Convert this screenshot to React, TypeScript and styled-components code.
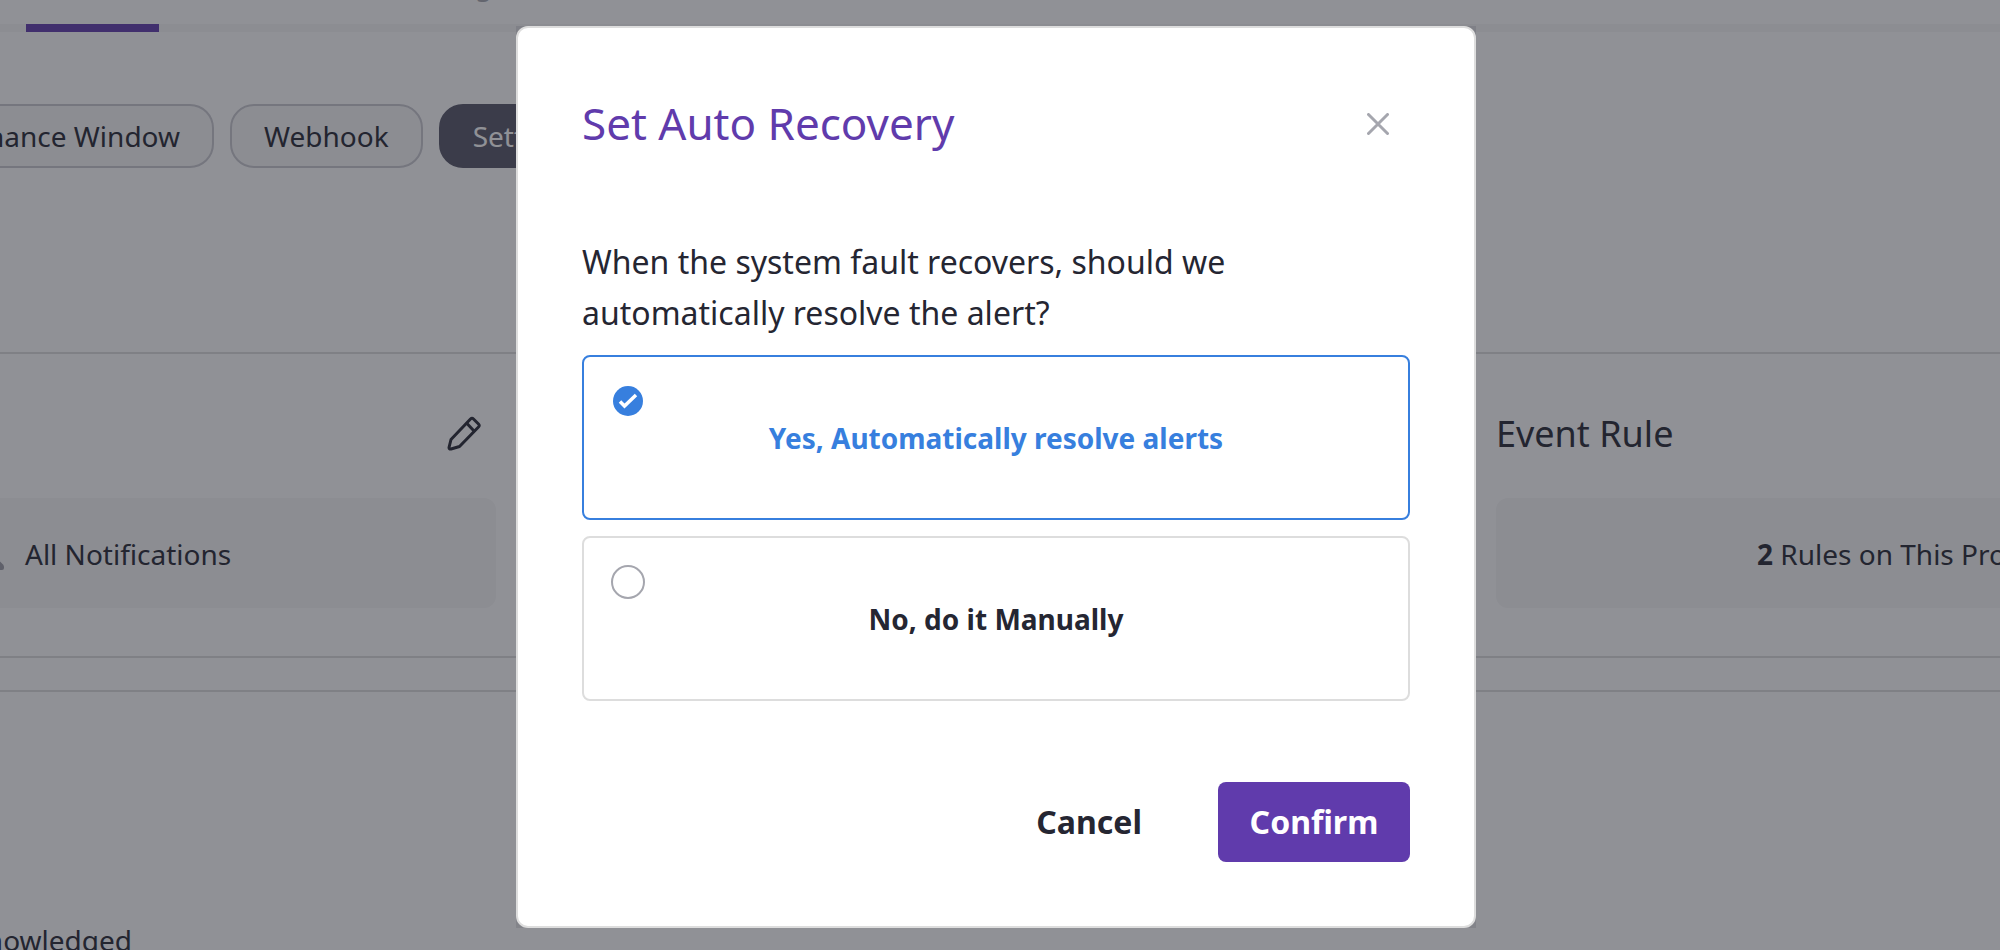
import React, { useState } from 'react';
import styled, { createGlobalStyle } from 'styled-components';

const color = {
  ink: '#252632',
  purple: '#603bac',
  blue: '#377fde',
  line: '#dddddd',
  soft: '#f6f6f7',
  muted: '#a5a6ae',
};

const GlobalStyle = createGlobalStyle`
  *, *::before, *::after { box-sizing: border-box; }
  body {
    margin: 0;
    overflow: hidden;
    background: #ffffff;
    color: ${color.ink};
    font-family: "Noto Sans", "Open Sans", sans-serif;
    font-size: 28px;
    line-height: 44px;
  }
  button { font: inherit; color: inherit; cursor: pointer; }
`;

const Page = styled.main`
  height: 100vh;
  overflow: hidden;
`;

const Tabs = styled.nav`
  display: flex;
  align-items: flex-end;
  gap: 240px;
  height: 32px;
  padding-left: 26px;
  overflow: hidden;
  box-shadow: inset 0 -8px ${color.soft};
`;

const Tab = styled.button<{ $active?: boolean }>`
  flex: none;
  min-width: 133px;
  padding: 0 0 18px;
  border: 0;
  border-bottom: 8px solid ${({ $active }) => ($active ? color.purple : 'transparent')};
  background: none;
  color: ${color.muted};
  text-align: left;
`;

const Chips = styled.div`
  display: flex;
  gap: 16px;
  padding: 72px 0 184px;
`;

const Chip = styled.button<{ $active?: boolean; $cut?: boolean }>`
  display: flex;
  flex: none;
  justify-content: flex-end;
  align-items: center;
  width: ${({ $cut }) => ($cut ? '214px' : 'auto')};
  height: 64px;
  padding: 0 32px;
  overflow: hidden;
  white-space: nowrap;
  border: 2px solid ${({ $active }) => ($active ? '#555566' : '#c8c8cf')};
  border-left-width: ${({ $cut }) => ($cut ? '0' : '2px')};
  border-radius: ${({ $cut }) => ($cut ? '0 24px 24px 0' : '24px')};
  background: ${({ $active }) => ($active ? '#555566' : color.soft)};
  color: ${({ $active }) => ($active ? '#ffffff' : color.ink)};
`;

const Summary = styled.section`
  display: grid;
  grid-template-columns: 496px minmax(0, 1fr) 504px;
  padding: 48px 0;
  border: solid ${color.line};
  border-width: 2px 0;
`;

const Panel = styled.div<{ $last?: boolean }>`
  grid-column: ${({ $last }) => ($last ? 3 : 1)};
  display: flex;
  flex-direction: column;
  gap: 32px;
  min-width: 0;
`;

const PanelHead = styled.header<{ $end?: boolean }>`
  display: flex;
  align-items: center;
  justify-content: ${({ $end }) => ($end ? 'flex-end' : 'flex-start')};
  height: 64px;
`;

const PanelTitle = styled.h2`
  margin: 0;
  font-size: 36px;
  font-weight: 400;
`;

const IconButton = styled.button`
  display: flex;
  align-items: center;
  justify-content: center;
  width: 64px;
  height: 64px;
  padding: 0;
  border: 0;
  background: none;
`;

const Tile = styled.div<{ $side: 'left' | 'right' }>`
  display: flex;
  align-items: center;
  gap: 21px;
  height: 110px;
  padding-top: 2px;
  padding-left: ${({ $side }) => ($side === 'right' ? '261px' : '0')};
  overflow: hidden;
  white-space: nowrap;
  border-radius: ${({ $side }) => ($side === 'right' ? '12px 0 0 12px' : '0 12px 12px 0')};
  background: ${color.soft};
`;

const Activity = styled.section`
  margin-top: 32px;
  padding-top: 226px;
  border-top: 2px solid ${color.line};
`;

const Status = styled.div`
  display: flex;
  justify-content: flex-end;
  width: 132px;
  overflow: hidden;
`;

const Backdrop = styled.div`
  position: fixed;
  inset: 0;
  display: flex;
  align-items: flex-start;
  justify-content: center;
  padding: 26px 8px 0 0;
  background: rgba(33, 35, 45, 0.5);
`;

const Frame = styled.div`
  width: 960px;
  max-width: 100%;
  background: rgba(80, 80, 90, 0.2);
`;

const Dialog = styled.form`
  padding: 64px;
  border: 2px solid ${color.line};
  border-radius: 12px;
  background: #ffffff;
`;

const DialogHead = styled.header`
  display: flex;
  align-items: flex-start;
  justify-content: space-between;
  margin-bottom: 80px;
`;

const DialogTitle = styled.h1`
  margin: 0;
  color: ${color.purple};
  font-size: 44px;
  font-weight: 400;
  line-height: 62px;
`;

const Choices = styled.fieldset`
  display: flex;
  flex-direction: column;
  gap: 16px;
  margin: 0;
  padding: 0;
  border: 0;
`;

const Question = styled.legend`
  max-width: 720px;
  margin-bottom: 17px;
  padding: 0;
  font-size: 32px;
  line-height: 51px;
`;

const Choice = styled.label<{ $on: boolean }>`
  display: grid;
  height: 165px;
  border: 2px solid ${({ $on }) => ($on ? color.blue : color.line)};
  border-radius: 8px;
  color: ${({ $on }) => ($on ? color.blue : color.ink)};
  font-weight: 700;
  cursor: pointer;

  > * { grid-area: 1 / 1; }
`;

const Radio = styled.input`
  appearance: none;
  width: 34px;
  height: 34px;
  margin: 27px;
  border: 2px solid ${color.muted};
  border-radius: 50%;

  &:checked { border-color: transparent; }
`;

const Mark = styled.svg`
  margin: 29px;
  pointer-events: none;
`;

const ChoiceText = styled.span`
  place-self: center;
`;

const Actions = styled.footer`
  display: flex;
  justify-content: flex-end;
  gap: 44px;
  margin-top: 81px;
`;

const Action = styled.button<{ $primary?: boolean }>`
  width: ${({ $primary }) => ($primary ? '192px' : 'auto')};
  height: 80px;
  padding: ${({ $primary }) => ($primary ? '0' : '0 32px')};
  border: 0;
  border-radius: 8px;
  background: ${({ $primary }) => ($primary ? color.purple : 'transparent')};
  color: ${({ $primary }) => ($primary ? '#ffffff' : color.ink)};
  font-size: 32px;
  font-weight: 700;
`;

const PencilIcon = () => (
  <svg width="34" height="36" viewBox="0 0 34 36" fill="none" stroke="currentColor" strokeWidth="3" strokeLinejoin="round" strokeLinecap="round">
    <path d="M23.500 3Q25 1.500 26.500 3L31.500 8Q33 9.500 31.500 11L12.500 30.500 4 33Q2 33.500 2 31.500L4 23.500Z" />
    <path d="M20 7.500 27 15" />
  </svg>
);

const CloseIcon = () => (
  <svg width="22" height="22" viewBox="0 0 22 22" stroke={color.muted} strokeWidth="3" strokeLinecap="round">
    <path d="M1.500 1.500 20.500 20.500M20.500 1.500 1.500 20.500" />
  </svg>
);

const CheckMark = () => (
  <Mark width="30" height="30" viewBox="0 0 30 30" fill="none">
    <circle cx="15" cy="15" r="15" fill={color.blue} />
    <path d="M7 15.500 11.500 20 23 9" stroke="#ffffff" strokeWidth="3.500" />
  </Mark>
);

const PersonIcon = () => (
  <svg width="4" height="32" viewBox="0 0 4 32" fill="#9c9ca6">
    <path d="M0 23.500 3 26.500Q4 27.500 4 29V30Q4 32 2 32H0Z" />
  </svg>
);

const choices = [
  { value: 'auto', text: 'Yes, Automatically resolve alerts' },
  { value: 'manual', text: 'No, do it Manually' },
];

export default function App() {
  const [choice, setChoice] = useState('auto');

  return (
    <>
      <GlobalStyle />
      <Page>
        <Tabs>
          <Tab type="button" $active aria-label="Alert" />
          <Tab type="button">Settings</Tab>
        </Tabs>
        <Chips>
          <Chip type="button" $cut>Maintenance Window</Chip>
          <Chip type="button">Webhook</Chip>
          <Chip type="button" $active>Settings</Chip>
        </Chips>
        <Summary>
          <Panel>
            <PanelHead $end>
              <IconButton type="button" aria-label="Edit notifications"><PencilIcon /></IconButton>
            </PanelHead>
            <Tile $side="left">
              <PersonIcon />
              <span>All Notifications</span>
            </Tile>
          </Panel>
          <Panel $last>
            <PanelHead>
              <PanelTitle>Event Rule</PanelTitle>
            </PanelHead>
            <Tile $side="right">
              <span><b>2</b> Rules on This Project</span>
            </Tile>
          </Panel>
        </Summary>
        <Activity>
          <Status>Acknowledged</Status>
        </Activity>
      </Page>
      <Backdrop>
        <Frame role="dialog" aria-modal="true" aria-labelledby="dialog-title">
          <Dialog onSubmit={(event) => event.preventDefault()}>
            <DialogHead>
              <DialogTitle id="dialog-title">Set Auto Recovery</DialogTitle>
              <IconButton type="button" aria-label="Close"><CloseIcon /></IconButton>
            </DialogHead>
            <Choices>
              <Question>When the system fault recovers, should we automatically resolve the alert?</Question>
              {choices.map(({ value, text }) => (
                <Choice key={value} $on={choice === value}>
                  <Radio
                    type="radio"
                    name="recovery"
                    value={value}
                    checked={choice === value}
                    onChange={() => setChoice(value)}
                  />
                  {choice === value && <CheckMark />}
                  <ChoiceText>{text}</ChoiceText>
                </Choice>
              ))}
            </Choices>
            <Actions>
              <Action type="button">Cancel</Action>
              <Action type="submit" $primary>Confirm</Action>
            </Actions>
          </Dialog>
        </Frame>
      </Backdrop>
    </>
  );
}
